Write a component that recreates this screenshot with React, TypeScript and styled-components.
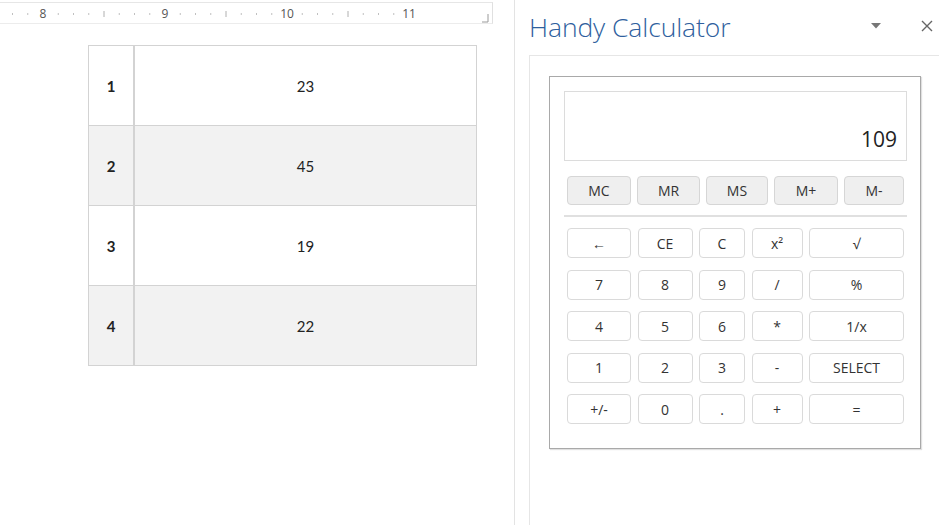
import React from "react";
import styled, { createGlobalStyle } from "styled-components";

const rows = [
    { n: "1", v: "23" },
    { n: "2", v: "45" },
    { n: "3", v: "19" },
    { n: "4", v: "22" },
];

const memoryKeys = ["MC", "MR", "MS", "M+", "M-"];

const keys = [
    ["←", "CE", "C", "x²", "√"],
    ["7", "8", "9", "/", "%"],
    ["4", "5", "6", "*", "1/x"],
    ["1", "2", "3", "-", "SELECT"],
    ["+/-", "0", ".", "+", "="],
];

// one inch on the ruler, in px
const INCH = 122;

function RulerTicks ()
{
    const marks: React.ReactNode[] = [];
    for (let i = 0; i * INCH / 8 < 492; i++)
    {
        const x = 43 - INCH + i * INCH / 8;
        if (x < 2 || x > 486) continue;
        const pos = i % 8;
        if (pos === 0)
        {
            const label = 7 + Math.floor(i / 8);
            marks.push(<text key={i} x={x} y={16} textAnchor="middle">{label}</text>);
        }
        else if (pos === 4)
            marks.push(<line key={i} x1={x} x2={x} y1={9} y2={15} stroke="#b0b0b0"/>);
        else
            marks.push(<line key={i} x1={x} x2={x} y1={11} y2={13} stroke="#c0c0c0"/>);
    }

    return (
        <svg width="492" height="22" viewBox="0 0 492 22">
            {marks}
            <path d="M488 12 V20 H482" fill="none" stroke="#9a9a9a" strokeWidth="1"/>
        </svg>
    );
}

export default function App ()
{
    return (
        <>
            <Global/>
            <Screen>
                <DocArea>
                    <Ruler><RulerTicks/></Ruler>
                    <Page>
                        <Table>
                            <tbody>
                                {rows.map((r, i) => (
                                    <Row key={r.n} $shaded={i % 2 === 1}>
                                        <NumCell>{r.n}</NumCell>
                                        <ValueCell>{r.v}</ValueCell>
                                    </Row>
                                ))}
                            </tbody>
                        </Table>
                    </Page>
                </DocArea>

                <TaskPane>
                    <PaneHeader>
                        <Title>Handy Calculator</Title>
                        <HeaderIcons>
                            <svg width="10" height="6" viewBox="0 0 10 6">
                                <path d="M0 0 H10 L5 5.5 Z" fill="#777"/>
                            </svg>
                            <svg width="12" height="12" viewBox="0 0 12 12">
                                <path d="M1 1 L11 11 M11 1 L1 11" stroke="#666" strokeWidth="1.4"/>
                            </svg>
                        </HeaderIcons>
                    </PaneHeader>

                    <PaneBody>
                        <Calculator>
                            <Display>109</Display>

                            <MemoryRow>
                                {memoryKeys.map(k => <Key key={k} $memory>{k}</Key>)}
                            </MemoryRow>

                            <Separator/>

                            <KeyGrid>
                                {keys.flat().map((k, i) => <Key key={i}>{k}</Key>)}
                            </KeyGrid>
                        </Calculator>
                    </PaneBody>
                </TaskPane>
            </Screen>
        </>
    );
}

/*
|--------------------------------------------------------------------------
| Styled
|--------------------------------------------------------------------------
*/

const Global = createGlobalStyle`
    html, body { margin: 0; padding: 0; background: #fff; }
    body { font-family: "Open Sans", "Noto Sans", sans-serif; }
`;

const Screen = styled.div`
    width: 939px;
    height: 525px;
    display: flex;
    overflow: hidden;
    background: #fff;
`;

const DocArea = styled.div`
    width: 514px;
    flex-shrink: 0;
    display: flex;
    flex-direction: column;
    padding-top: 2px;
    box-sizing: border-box;
`;

const Ruler = styled.div`
    width: 492px;
    height: 20px;
    border-top: 1px solid #e6e6e6;
    border-bottom: 1px solid #ececec;
    border-right: 1px solid #e0e0e0;
    overflow: hidden;

    svg { display: block; margin-top: -1px; }
    text {
        font-family: "Open Sans", sans-serif;
        font-size: 12px;
        fill: #555;
    }
`;

const Page = styled.div`
    padding: 21px 0 0 88px;
`;

const Table = styled.table`
    border-collapse: collapse;
    width: 389px;
    font-family: Lato, "Open Sans", sans-serif;
    font-size: 15px;
    color: #222;
`;

const Row = styled.tr<{ $shaded?: boolean }>`
    height: 80px;
    background: ${p => p.$shaded ? "#f2f2f2" : "#fff"};
`;

const NumCell = styled.td`
    width: 44px;
    border: 1px solid #d3d3d3;
    border-right-width: 2px;
    text-align: center;
    font-weight: 700;
    padding: 0;
`;

const ValueCell = styled.td`
    border: 1px solid #d3d3d3;
    text-align: center;
    padding: 0;
`;

const TaskPane = styled.div`
    flex: 1;
    display: flex;
    flex-direction: column;
    border-left: 1px solid #e3e3e3;
`;

const PaneHeader = styled.div`
    height: 55px;
    display: flex;
    align-items: center;
    justify-content: space-between;
    padding: 0 3px 0 14px;
`;

const Title = styled.h1`
    margin: 0;
    margin-top: -1px;
    font-family: "Open Sans", "Noto Sans", sans-serif;
    font-weight: 300;
    font-size: 26.5px;
    letter-spacing: -0.1px;
    color: #2f5f9e;
`;

const HeaderIcons = styled.div`
    display: flex;
    align-items: center;
    gap: 40px;
    margin: -3px 0 0 0;
    padding-right: 0;
    transform: translateX(-3px);
`;

const PaneBody = styled.div`
    flex: 1;
    margin-left: 14px;
    border-top: 1px solid #e6e6e6;
    border-left: 1px solid #e6e6e6;
    padding: 20px 0 0 19px;
`;

const Calculator = styled.div`
    width: 372px;
    box-sizing: border-box;
    border: 1px solid #a9a9a9;
    box-shadow: 1px 1px 1px rgba(0,0,0,0.12);
    padding: 14px 13px 24px 14px;
    display: flex;
    flex-direction: column;
`;

const Display = styled.div`
    height: 70px;
    box-sizing: border-box;
    border: 1px solid #dcdcdc;
    display: flex;
    align-items: flex-end;
    justify-content: flex-end;
    padding: 0 9px 7px 0;
    font-size: 21px;
    color: #222;
`;

const MemoryRow = styled.div`
    display: grid;
    grid-template-columns: 64px 63px 62px 64px 60px;
    column-gap: 6px;
    margin: 15px 3px 0 3px;
`;

const Separator = styled.hr`
    margin: 10px 0 11px;
    border: 0;
    border-top: 2px solid #e0e0e0;
`;

const KeyGrid = styled.div`
    display: grid;
    grid-template-columns: 64px 55px 46px 51px 95px;
    grid-auto-rows: 30px;
    column-gap: 6.5px;
    row-gap: 11.5px;
    margin: 0 3px 0 3px;
`;

const Key = styled.button<{ $memory?: boolean }>`
    all: unset;
    box-sizing: border-box;
    height: ${p => p.$memory ? "29px" : "30px"};
    display: flex;
    align-items: center;
    justify-content: center;
    border: 1px solid ${p => p.$memory ? "#d6d6d6" : "#dadada"};
    border-radius: 4px;
    background: ${p => p.$memory ? "#efefef" : "#fff"};
    font-family: "Open Sans", "Noto Sans", sans-serif;
    font-size: 14px;
    color: #333;
    cursor: pointer;
`;
